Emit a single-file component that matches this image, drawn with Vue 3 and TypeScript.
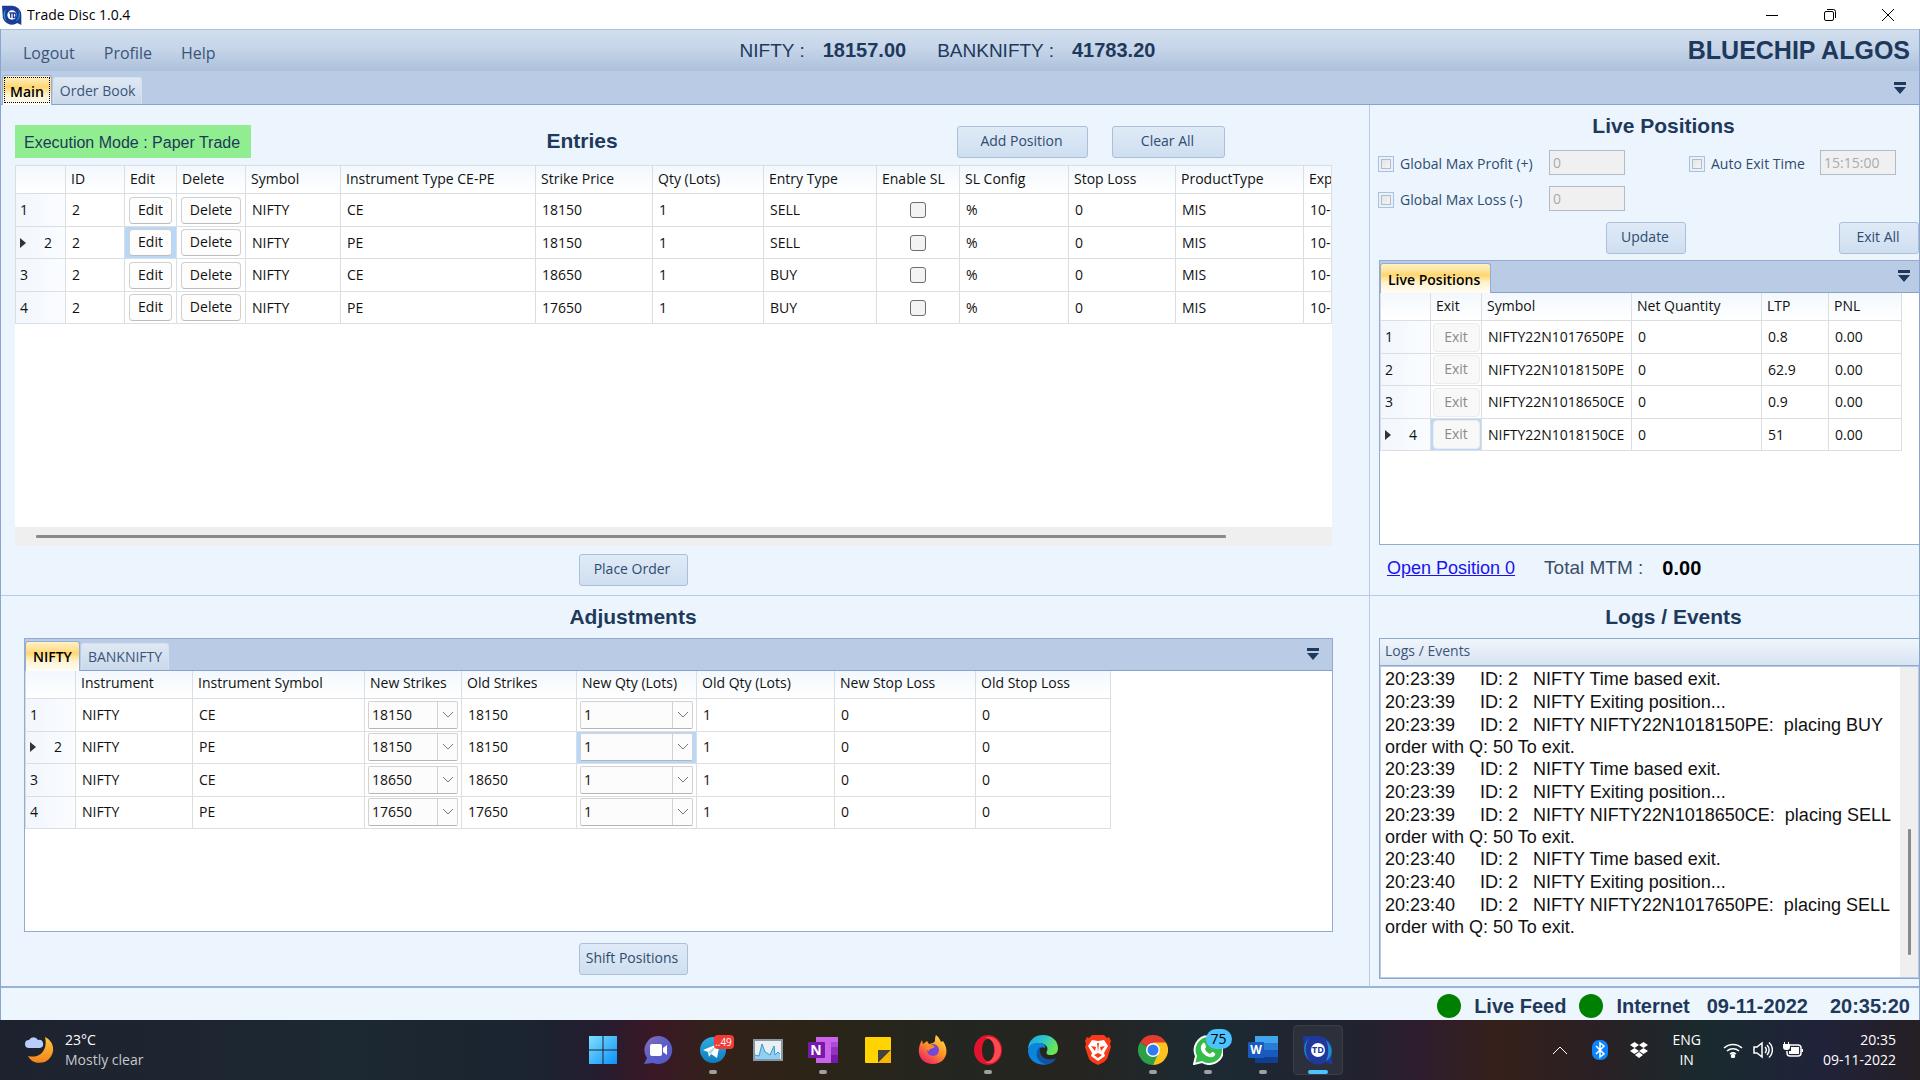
<script setup lang="ts">
import { ref } from 'vue'

interface Entry { id: number; symbol: string; type: string; strike: number; qty: number; side: string; sl: boolean; config: string; stop: number; product: string; expiry: string }
interface Adjustment { instrument: string; type: string; strike: number; qty: number }
interface Position { symbol: string; qty: number; ltp: string; pnl: string }

const entryHeaders = ['ID', 'Edit', 'Delete', 'Symbol', 'Instrument Type CE-PE', 'Strike Price', 'Qty (Lots)', 'Entry Type', 'Enable SL', 'SL Config', 'Stop Loss', 'ProductType', 'Exp']
const makeEntry = (type: string, strike: number, side: string): Entry => ({ id: 2, symbol: 'NIFTY', type, strike, qty: 1, side, sl: false, config: '%', stop: 0, product: 'MIS', expiry: '10-' })
const entries = ref<Entry[]>([
  makeEntry('CE', 18150, 'SELL'),
  makeEntry('PE', 18150, 'SELL'),
  makeEntry('CE', 18650, 'BUY'),
  makeEntry('PE', 17650, 'BUY'),
])

const adjustHeaders = ['Instrument', 'Instrument Symbol', 'New Strikes', 'Old Strikes', 'New Qty (Lots)', 'Old Qty (Lots)', 'New Stop Loss', 'Old Stop Loss']
const adjustments: Adjustment[] = [
  { instrument: 'NIFTY', type: 'CE', strike: 18150, qty: 1 },
  { instrument: 'NIFTY', type: 'PE', strike: 18150, qty: 1 },
  { instrument: 'NIFTY', type: 'CE', strike: 18650, qty: 1 },
  { instrument: 'NIFTY', type: 'PE', strike: 17650, qty: 1 },
]

const positions: Position[] = [
  { symbol: 'NIFTY22N1017650PE', qty: 0, ltp: '0.8', pnl: '0.00' },
  { symbol: 'NIFTY22N1018150PE', qty: 0, ltp: '62.9', pnl: '0.00' },
  { symbol: 'NIFTY22N1018650CE', qty: 0, ltp: '0.9', pnl: '0.00' },
  { symbol: 'NIFTY22N1018150CE', qty: 0, ltp: '51', pnl: '0.00' },
]

const logs: string[] = [
  '20:23:39     ID: 2   NIFTY Time based exit.',
  '20:23:39     ID: 2   NIFTY Exiting position...',
  '20:23:39     ID: 2   NIFTY NIFTY22N1018150PE:  placing BUY order with Q: 50 To exit.',
  '20:23:39     ID: 2   NIFTY Time based exit.',
  '20:23:39     ID: 2   NIFTY Exiting position...',
  '20:23:39     ID: 2   NIFTY NIFTY22N1018650CE:  placing SELL order with Q: 50 To exit.',
  '20:23:40     ID: 2   NIFTY Time based exit.',
  '20:23:40     ID: 2   NIFTY Exiting position...',
  '20:23:40     ID: 2   NIFTY NIFTY22N1017650PE:  placing SELL order with Q: 50 To exit.',
]
</script>

<template>
  <div class="screen">
    <header class="titlebar">
      <svg class="applogo" viewBox="0 0 30 30" aria-hidden="true">
        <path d="M0 1h15a14 14 0 0 1 14 14v15l-6-3a14 14 0 0 1-22-12z" fill="#1d3a97" />
        <path d="M6 6a13 13 0 0 0 1 19c-3-6-3-13-1-19zM23 5c4 5 3 14-3 20 7-3 10-12 3-20z" fill="#1c9ad0" />
        <circle cx="15" cy="15" r="7" fill="#fff" />
        <path d="M11 12h5M13 12v7M17 12v7h1c4 0 4-7 0-7z" fill="none" stroke="#1d3a97" stroke-width="2" />
      </svg>
      <span class="apptitle">Trade Disc 1.0.4</span>
      <div class="winbuttons">
        <button aria-label="Minimize"><svg viewBox="0 0 14 14"><path d="M1 7.500h12" /></svg></button>
        <button aria-label="Restore"><svg viewBox="0 0 14 14"><rect x="1.500" y="3.500" width="9" height="9" rx="1.500" /><path d="M4 1.500h6.500a2 2 0 0 1 2 2V10" /></svg></button>
        <button aria-label="Close"><svg viewBox="0 0 14 14"><path d="M1 1l12 12M13 1L1 13" /></svg></button>
      </div>
    </header>

    <div class="window">
      <div class="menubar">
        <nav>
          <a href="#">Logout</a>
          <a href="#">Profile</a>
          <a href="#">Help</a>
        </nav>
        <div class="quotes">
          <span>NIFTY :</span><b>18157.00</b>
          <span class="next">BANKNIFTY :</span><b>41783.20</b>
        </div>
        <div class="brand">BLUECHIP ALGOS</div>
      </div>

      <div class="tabstrip">
        <button class="tab active focus">Main</button>
        <button class="tab">Order Book</button>
        <svg class="overflow" viewBox="0 0 12 12"><path d="M0 0h12v3H0zM0 5h12l-6 7z" /></svg>
      </div>

      <main>
        <section class="entries">
          <div class="toolbar">
            <span class="mode">Execution Mode : Paper Trade</span>
            <h2>Entries</h2>
            <button class="btn add">Add Position</button>
            <button class="btn clear">Clear All</button>
          </div>
          <div class="gridbox">
            <table>
              <colgroup>
                <col style="width: 51px" /><col style="width: 59px" /><col style="width: 52px" /><col style="width: 69px" />
                <col style="width: 95px" /><col style="width: 195px" /><col style="width: 117px" /><col style="width: 111px" />
                <col style="width: 113px" /><col style="width: 83px" /><col style="width: 109px" /><col style="width: 107px" />
                <col style="width: 128px" /><col />
              </colgroup>
              <thead>
                <tr><th></th><th v-for="h in entryHeaders" :key="h">{{ h }}</th></tr>
              </thead>
              <tbody>
                <tr v-for="(e, i) in entries" :key="i">
                  <td class="rowhead"><span :class="{ current: i === 1 }">{{ i + 1 }}</span></td>
                  <td>{{ e.id }}</td>
                  <td class="ctl" :class="{ picked: i === 1 }"><button class="cellbtn edit">Edit</button></td>
                  <td class="ctl"><button class="cellbtn delete">Delete</button></td>
                  <td>{{ e.symbol }}</td>
                  <td>{{ e.type }}</td>
                  <td>{{ e.strike }}</td>
                  <td>{{ e.qty }}</td>
                  <td>{{ e.side }}</td>
                  <td class="ctl"><input v-model="e.sl" type="checkbox" class="sl" :aria-label="'Enable SL for entry ' + (i + 1)" /></td>
                  <td>{{ e.config }}</td>
                  <td>{{ e.stop }}</td>
                  <td>{{ e.product }}</td>
                  <td>{{ e.expiry }}</td>
                </tr>
              </tbody>
            </table>
          </div>
          <div class="hscroll"><i></i></div>
          <div class="actions centred"><button class="btn">Place Order</button></div>
        </section>

        <section class="live">
          <h2>Live Positions</h2>
          <form class="risk" @submit.prevent>
            <div class="riskrow">
              <label><input type="checkbox" />Global Max Profit (+)</label>
              <input class="field" type="text" value="0" disabled aria-label="Global max profit" />
              <label class="auto"><input type="checkbox" />Auto Exit Time</label>
              <input class="field" type="text" value="15:15:00" disabled aria-label="Auto exit time" />
            </div>
            <div class="riskrow">
              <label><input type="checkbox" />Global Max Loss (-)</label>
              <input class="field" type="text" value="0" disabled aria-label="Global max loss" />
            </div>
            <div class="riskbuttons">
              <button class="btn" type="button">Update</button>
              <button class="btn" type="button">Exit All</button>
            </div>
          </form>
          <div class="panel">
            <div class="tabstrip">
              <button class="tab active">Live Positions</button>
              <svg class="overflow" viewBox="0 0 12 12"><path d="M0 0h12v3H0zM0 5h12l-6 7z" /></svg>
            </div>
            <table class="fit">
              <colgroup>
                <col style="width: 51px" /><col style="width: 51px" /><col style="width: 150px" />
                <col style="width: 130px" /><col style="width: 67px" /><col style="width: 73px" />
              </colgroup>
              <thead>
                <tr><th></th><th>Exit</th><th>Symbol</th><th>Net Quantity</th><th>LTP</th><th>PNL</th></tr>
              </thead>
              <tbody>
                <tr v-for="(p, i) in positions" :key="p.symbol">
                  <td class="rowhead"><span :class="{ current: i === 3 }">{{ i + 1 }}</span></td>
                  <td class="ctl" :class="{ picked: i === 3 }"><button class="cellbtn exit" disabled>Exit</button></td>
                  <td>{{ p.symbol }}</td>
                  <td>{{ p.qty }}</td>
                  <td>{{ p.ltp }}</td>
                  <td>{{ p.pnl }}</td>
                </tr>
              </tbody>
            </table>
          </div>
          <div class="totals">
            <a href="#">Open Position 0</a>
            <span>Total MTM :</span>
            <b>0.00</b>
          </div>
        </section>

        <section class="adjust">
          <h2 class="centred">Adjustments</h2>
          <div class="panel">
            <div class="tabstrip">
              <button class="tab active">NIFTY</button>
              <button class="tab">BANKNIFTY</button>
              <svg class="overflow" viewBox="0 0 12 12"><path d="M0 0h12v3H0zM0 5h12l-6 7z" /></svg>
            </div>
            <table class="fit">
              <colgroup>
                <col style="width: 51px" /><col style="width: 117px" /><col style="width: 172px" /><col style="width: 97px" />
                <col style="width: 115px" /><col style="width: 120px" /><col style="width: 138px" /><col style="width: 141px" /><col style="width: 135px" />
              </colgroup>
              <thead>
                <tr><th></th><th v-for="h in adjustHeaders" :key="h">{{ h }}</th></tr>
              </thead>
              <tbody>
                <tr v-for="(a, i) in adjustments" :key="i">
                  <td class="rowhead"><span :class="{ current: i === 1 }">{{ i + 1 }}</span></td>
                  <td>{{ a.instrument }}</td>
                  <td>{{ a.type }}</td>
                  <td class="ctl">
                    <div class="combo">
                      <select :aria-label="'New strike ' + (i + 1)"><option>{{ a.strike }}</option></select>
                      <span><svg viewBox="0 0 10 6"><path d="M0 0l5 5 5-5" /></svg></span>
                    </div>
                  </td>
                  <td>{{ a.strike }}</td>
                  <td class="ctl" :class="{ picked: i === 1 }">
                    <div class="combo">
                      <select :aria-label="'New quantity ' + (i + 1)"><option>{{ a.qty }}</option></select>
                      <span><svg viewBox="0 0 10 6"><path d="M0 0l5 5 5-5" /></svg></span>
                    </div>
                  </td>
                  <td>{{ a.qty }}</td>
                  <td>0</td>
                  <td>0</td>
                </tr>
              </tbody>
            </table>
          </div>
          <div class="actions centred"><button class="btn">Shift Positions</button></div>
        </section>

        <section class="logs">
          <h2>Logs / Events</h2>
          <div class="logpanel">
            <div class="logtitle">Logs / Events</div>
            <div class="logbody">
              <div class="lines"><p v-for="(l, i) in logs" :key="i">{{ l }}</p></div>
              <div class="vscroll"><i></i></div>
            </div>
          </div>
        </section>
      </main>

      <footer class="status">
        <i class="lamp"></i><span class="feed">Live Feed</span>
        <i class="lamp"></i><span class="net">Internet</span>
        <span class="date">09-11-2022</span>
        <span>20:35:20</span>
      </footer>
    </div>

    <div class="taskbar">
      <div class="weather">
        <svg width="32" height="30" viewBox="0 0 32 30">
          <defs>
            <linearGradient id="moon" x1="0" y1="0" x2="0" y2="1"><stop offset="0" stop-color="#ffc83a" /><stop offset="1" stop-color="#f4821c" /></linearGradient>
          </defs>
          <path d="M21 2c9 4 11 15 4 22-6 6-17 5-21-3 13 3 20-7 17-19z" fill="url(#moon)" />
          <path d="M5 13a4 4 0 0 1 0-8 5 5 0 0 1 9 0 4 4 0 0 1 2 8z" fill="#b9cdfb" />
        </svg>
        <div><div>23°C</div><div class="dim">Mostly clear</div></div>
      </div>

      <div class="apps">
        <button aria-label="Start">
          <svg viewBox="0 0 30 30">
            <defs><linearGradient id="win" x1="0" y1="0" x2="1" y2="1"><stop offset="0" stop-color="#7fe0ff" /><stop offset="1" stop-color="#0a91f8" /></linearGradient></defs>
            <path d="M1 1h13.500v13.500H1zM15.500 1H29v13.500H15.500zM1 15.500h13.500V29H1zM15.500 15.500H29V29H15.500z" fill="url(#win)" />
          </svg>
        </button>
        <button aria-label="Chat">
          <svg viewBox="0 0 30 30">
            <defs><linearGradient id="chat" x1="0" y1="0" x2="1" y2="1"><stop offset="0" stop-color="#8d6cb8" /><stop offset=".5" stop-color="#5a5fc9" /><stop offset="1" stop-color="#5558c4" /></linearGradient></defs>
            <path d="M15 1a14 14 0 1 1-5 27l-9 1 3-6A14 14 0 0 1 15 1z" fill="url(#chat)" />
            <rect x="7" y="9" width="12" height="12" rx="2" fill="#fff" /><path d="M20 13l4-3v10l-4-3z" fill="#fff" />
          </svg>
        </button>
        <button aria-label="Telegram" class="running">
          <svg viewBox="0 0 30 30">
            <defs><linearGradient id="tg" x1="0" y1="0" x2="0" y2="1"><stop offset="0" stop-color="#34abe0" /><stop offset="1" stop-color="#0b7dbd" /></linearGradient></defs>
            <circle cx="15" cy="15" r="13" fill="url(#tg)" />
            <path d="M5 15l17-7-3 15-6-4-2 3-1-5z" fill="#fff" /><path d="M10 17l9-7-6 9" fill="#b5d6ea" />
          </svg>
          <span class="badge red">..49</span>
        </button>
        <button aria-label="Monitor">
          <svg viewBox="0 0 30 30">
            <rect x="1" y="5" width="28" height="20" fill="#e8eff5" stroke="#8a96a2" stroke-width="2" />
            <path d="M2 24v-4l4 1 3-12 3 8 2 1 3 2 4-9 1 9 3-3 2 2v5z" fill="#8ed0f5" />
            <path d="M2 20l4 1 3-12 3 8 2 1 3 2 4-9 1 9 3-3 2 2" fill="none" stroke="#3f95c8" />
          </svg>
        </button>
        <button aria-label="OneNote" class="running">
          <svg viewBox="0 0 30 30">
            <path d="M8 2h22v26H8z" fill="#ca64ea" /><path d="M23 7h7v5h-7z" fill="#ae4bd5" /><path d="M23 12h7v8h-7z" fill="#9332bf" /><path d="M23 20h7v8h-7z" fill="#7719aa" />
            <rect y="7" width="17" height="16" rx="1" fill="#7719aa" />
            <text x="8" y="20" font-size="14" font-weight="700" text-anchor="middle" fill="#fff">N</text>
          </svg>
        </button>
        <button aria-label="Sticky Notes">
          <svg viewBox="0 0 30 30"><rect x="2" y="2" width="26" height="26" rx="1" fill="#ffd400" /><path d="M15 28V15h13z" fill="#43423c" /><path d="M15 28L28 15v13z" fill="#f5b800" /></svg>
        </button>
        <button aria-label="Firefox">
          <svg viewBox="0 0 30 30">
            <defs><linearGradient id="fox" x1=".9" y1="0" x2=".2" y2="1"><stop offset="0" stop-color="#ffe34a" /><stop offset=".45" stop-color="#ff9a24" /><stop offset="1" stop-color="#ed1a69" /></linearGradient></defs>
            <path d="M18 0c3 2 4 5 5 7l2-1c8 12 1 23-10 23C2 29-3 17 4 5l1 4 4-3 2 3c3-1 5-1 6-3 0-2 0-4 1-6z" fill="url(#fox)" />
            <circle cx="15" cy="15" r="6" fill="#7547d8" /><path d="M9 10c5-2 6 1 8 2-2 2-6 1-6 4-3-1-4-4-2-6z" fill="#ff8a20" />
          </svg>
        </button>
        <button aria-label="Opera" class="running">
          <svg viewBox="0 0 30 30">
            <path fill-rule="evenodd" d="M15 0a14 15 0 1 1 0 30 14 15 0 0 1 0-30zm0 4c-8 0-8 22 0 22s8-22 0-22z" fill="#e3122d" />
            <path d="M12 3c5-4 16 1 16 12s-11 16-16 12c13 1 13-25 0-24z" fill="#fb4a51" />
          </svg>
        </button>
        <button aria-label="Edge">
          <svg viewBox="0 0 30 30">
            <defs>
              <linearGradient id="edgetop" x1="0" y1="0" x2="1" y2=".4"><stop offset="0" stop-color="#1a9fe0" /><stop offset=".5" stop-color="#2ac3d2" /><stop offset="1" stop-color="#6be552" /></linearGradient>
            </defs>
            <path d="M0 15C0 6 6 0 15 0c9 0 15 6 15 13 0 5-3 7-7 7-5 0-5-2-4-4 2-4-2-8-8-8C6 8 1 11 0 15z" fill="url(#edgetop)" />
            <path d="M0 15c1-5 6-8 11-7 5 0 7 3 6 5-5-3-8 3-6 8 2 4 7 7 13 5l2-1c-4 5-12 6-18 3C3 26 0 21 0 15z" fill="#0b84dc" />
            <path d="M12 12c-7 6-2 17 7 17 4 0 7-2 9-6-5 3-18 2-16-11z" fill="#1153a2" />
          </svg>
        </button>
        <button aria-label="Brave">
          <svg viewBox="0 0 30 30">
            <path d="M9 0h12l3 3 2-1 2 4-1 3 1 3-4 12-3 3-6 3-6-3-3-3L2 12l1-3-1-3 2-4 2 1z" fill="#f83a18" />
            <path d="M9 5l6 1 6-1 4 6-4 7 1 3-7 5-7-5 1-3-4-7z" fill="#fff" />
            <path d="M8 11l5 1-1 4zM22 11l-5 1 1 4zM11 20l4-2 4 2-4 3zM14 8h2l-1 9z" fill="#f83a18" />
          </svg>
        </button>
        <button aria-label="Chrome" class="running">
          <svg viewBox="0 0 30 30">
            <path d="M15 15L2 7.500A15 15 0 0 1 28 7.500z" fill="#e33b2e" /><path d="M2 7.500A15 15 0 0 0 15 30l6.500-11.500L15 15z" fill="#2c9f48" /><path d="M28 7.500A15 15 0 0 1 15 30l7-15-7-7.500z" fill="#fcc31e" />
            <circle cx="15" cy="15" r="7" fill="#fff" /><circle cx="15" cy="15" r="5.500" fill="#2f7cf0" />
          </svg>
        </button>
        <button aria-label="WhatsApp" class="running">
          <svg viewBox="0 0 30 30">
            <path d="M15 1a14 14 0 1 1-6 26l-8 2 2-8A14 14 0 0 1 15 1z" fill="#35bd4a" stroke="#fff" stroke-width="2" />
            <path d="M10 8c2-1 3 3 3 4l-1 2c1 3 3 4 5 5l2-2c2 0 4 2 3 3-3 6-16-1-14-9z" fill="#fff" />
          </svg>
          <span class="badge blue">75</span>
        </button>
        <button aria-label="Word" class="running">
          <svg viewBox="0 0 30 30">
            <path d="M7 1h23v7H7z" fill="#41a5ee" /><path d="M7 8h23v7H7z" fill="#2b7cd3" /><path d="M7 15h23v7H7z" fill="#185abd" /><path d="M7 22h23v6H7z" fill="#103f91" />
            <rect y="7" width="16" height="16" rx="1" fill="#185abd" />
            <text x="8" y="19" font-size="12" font-weight="700" text-anchor="middle" fill="#fff">W</text>
          </svg>
        </button>
        <button aria-label="Trade Disc" class="running current">
          <svg viewBox="0 0 30 30">
            <path d="M0 1h15a14 14 0 0 1 14 14v15l-6-3a14 14 0 0 1-22-12z" fill="#20389c" />
            <path d="M6 3a15 15 0 0 0 0 22C1 18 2 9 6 3zM23 5c9 8 6 18 0 21 3-7 3-14 0-21z" fill="#1b8fc4" />
            <circle cx="15" cy="15" r="7" fill="#fff" />
            <text x="15" y="18" font-size="9" font-weight="700" text-anchor="middle" fill="#20389c">TD</text>
          </svg>
        </button>
      </div>

      <div class="tray">
        <svg class="chev" width="16" height="10" viewBox="0 0 16 10"><path d="M1 9l7-7 7 7" /></svg>
        <svg class="bt" width="16" height="20" viewBox="0 0 16 20"><rect width="16" height="20" rx="7" fill="#0a84ff" /><path d="M4 6l8 8-4 3V3l4 3-8 8" stroke="#fff" fill="none" stroke-width="1.500" /></svg>
        <svg class="db" width="18" height="16" viewBox="0 0 18 16"><path d="M4.500 0L9 3 4.500 6 0 3zM13.500 0L18 3l-4.500 3L9 3zM4.500 6L9 9l-4.500 3L0 9zM13.500 6L18 9l-4.500 3L9 9zM9 10l4 3-4 3-4-3z" fill="#fff" /></svg>
        <div class="lang"><div>ENG</div><div>IN</div></div>
        <svg class="bold" width="20" height="16" viewBox="0 0 20 16"><path d="M1 6a13 13 0 0 1 18 0M4 9a9 9 0 0 1 12 0M7 12a5 5 0 0 1 6 0" /><circle cx="10" cy="14" r="1.500" fill="#fff" /></svg>
        <svg class="vol bold" width="20" height="18" viewBox="0 0 20 18"><path d="M1 6h3l5-4v14l-5-4H1zM12 6a4 4 0 0 1 0 6M14 4a7 7 0 0 1 0 10M16 1.500a10 10 0 0 1 0 15" /></svg>
        <svg class="bat bold" width="20" height="16" viewBox="0 0 20 16"><path d="M7 3h8a3 3 0 0 1 3 3v5a3 3 0 0 1-3 3H7a3 3 0 0 1-3-3V9" /><path d="M8 5h8v7H6V9h2zM18.500 7H20v3h-1.500zM0 2h1V0h1v2h3V0h1v2h1v3a3 3 0 0 1-3 3H3a3 3 0 0 1-3-3z" fill="#fff" stroke="none" /></svg>
        <div class="clock"><div>20:35</div><div>09-11-2022</div></div>
      </div>
    </div>
  </div>
</template>

<style>
body { margin: 0; }
</style>

<style scoped>
* { box-sizing: border-box; }
.screen {
  display: flex;
  flex-direction: column;
  min-height: 100vh;
  font: 14px/20px "Open Sans", "Noto Sans", sans-serif;
  color: #111;
  background: #fff;
}
button, input, select { font: inherit; color: inherit; margin: 0; }
h2 { margin: 0; font: bold 21px/42px "Liberation Sans", Arial, sans-serif; color: #1e395b; text-align: center; }
.centred { padding-right: 104px; }

.titlebar { display: flex; align-items: center; height: 29px; padding-left: 2px; color: #000; }
.applogo { width: 20px; height: 20px; margin-right: 5px; }
.winbuttons { display: flex; margin-left: auto; gap: 10px; padding-right: 8px; }
.winbuttons button { width: 48px; height: 28px; padding: 0; border: 0; background: none; }
.winbuttons svg { width: 14px; height: 14px; display: block; margin: 0 auto; fill: none; stroke: #000; }

.window { flex: 1; display: flex; flex-direction: column; border: 1px solid #8aa6cf; border-width: 0 1px; background: #ecf5fd; }
.menubar {
  display: flex;
  align-items: center;
  height: 42px;
  border-top: 1px solid #abc0da;
  background: linear-gradient(#d0deed, #c6d5e9 45%, #acc1dc);
  color: #1e395b;
}
.menubar nav { flex: 1 0 0; display: flex; gap: 29px; padding: 4px 0 0 22px; font-size: 16px; }
.menubar a { color: #3b5578; text-decoration: none; }
.quotes { display: flex; align-items: baseline; margin-right: 38px; font: 19px/24px "Liberation Sans", Arial, sans-serif; }
.quotes b { font-size: 20px; margin-left: 18px; }
.quotes .next { margin-left: 31px; }
.brand { flex: 1 0 0; text-align: right; padding: 0 9px 2px 0; font: bold 25px/28px "Liberation Sans", Arial, sans-serif; }

.tabstrip {
  display: flex;
  align-items: flex-end;
  gap: 1px;
  height: 34px;
  flex: none;
  background: #bacce5;
  border-bottom: 1px solid #86a3cb;
}
.tab {
  height: 27px;
  padding: 0 6px;
  border: 1px solid #d5e1f0;
  border-bottom: 0;
  border-radius: 3px 3px 0 0;
  background: linear-gradient(#dfe9f4, #c9d8ea);
  color: #3b5578;
}
.tab.active {
  height: 30px;
  padding: 2px 7px 0;
  margin-bottom: -1px;
  border-color: #93aed4;
  background: linear-gradient(#fff0c4, #ffdf8e 28%, #ffd56c 38%, #fff3cf 65%, #fffdf6);
  color: #000;
  font-weight: 600;
}
.tab.focus { margin-left: 1px; outline: 1px dotted #000; outline-offset: -3px; }
.overflow { width: 12px; height: 12px; margin: 0 13px 10px auto; fill: #1e395b; }

main { flex: 1; display: grid; grid-template-columns: minmax(0, 1fr) 550px; grid-template-rows: 5fr 4fr; }
section { display: flex; flex-direction: column; min-width: 0; border-bottom: 1px solid #b6cbe8; }
.live, .logs { border-left: 1px solid #b6cbe8; }
.adjust, .logs { border-bottom: 2px solid #9ab2d6; }

.btn {
  height: 32px;
  padding: 0 2px 2px 0;
  border: 1px solid #abbfdb;
  border-radius: 3px;
  background: linear-gradient(#dfeaf7, #cfdff0);
  color: #2f4b70;
}
.toolbar { display: flex; align-items: center; height: 60px; flex: none; padding: 20px 0 7px 14px; }
.toolbar h2 { flex: 1; padding: 0 44px 2px 0; line-height: 30px; }
.mode { width: 236px; height: 33px; background: #90ee90; padding-left: 9px; font: 16px/36px "Liberation Sans", Arial, sans-serif; color: #1e395b; }
.add { width: 131px; margin-right: 24px; }
.clear { width: 113px; margin-right: 144px; }

.gridbox { flex: 1; margin: 0 37px 0 14px; background: #fff; overflow: hidden; border-top: 1px solid #d9dee3; }
table { width: 100%; table-layout: fixed; border-collapse: separate; border-spacing: 0; background: #fff; }
table.fit { width: max-content; }
th, td { padding: 0 0 0 6px; border: solid #dcdfe2; border-width: 0 1px 1px 0; white-space: nowrap; overflow: hidden; text-align: left; }
th { height: 28px; padding: 0 0 2px 5px; font-weight: 400; background: linear-gradient(#f3f8fd, #fff); }
td { height: 32px; }
tbody tr:nth-child(odd) td { height: 33px; }
td:first-child, th:first-child { border-left: 1px solid #dcdfe2; }
.rowhead { padding-left: 4px; background: linear-gradient(90deg, #f2f7fe, #fafcff); }
.rowhead .current { display: flex; align-items: center; gap: 18px; }
.rowhead .current::before { content: ""; border: solid transparent; border-width: 5px 0 5px 6px; border-left-color: #333; }
td.ctl { padding: 0; text-align: center; }
.picked { background: #b8d8fb; }
.cellbtn { display: block; height: 27px; margin: 0 auto; padding: 0 0 1px; border: 1px solid #d0d0d0; border-bottom-color: #bcbcbc; border-radius: 4px; background: #fdfdfd; }
.edit { width: 43px; }
.delete { width: 60px; }
.exit { width: 47px; height: 29px; border-color: #ececec; background: #f8f8f8; color: #8b8b8b; }
.sl { appearance: none; display: block; width: 16px; height: 16px; margin: 0 auto; border: 1px solid #6d6d6d; border-radius: 3px; background: #f3f3f3; }
.hscroll { height: 19px; margin: 0 37px 0 14px; padding: 8px 106px 0 21px; background: #efefef; }
.hscroll i { display: block; height: 3px; border-radius: 1px; background: #8a8a8a; }
.actions { display: flex; justify-content: center; padding-top: 8px; }
.entries .actions { padding-bottom: 9px; }
.actions .btn { width: 109px; }

.live h2 { padding-left: 38px; }
.risk { display: flex; flex-direction: column; gap: 11px; padding: 3px 0 6px 8px; color: #2f4b70; }
.riskrow { display: flex; align-items: center; height: 25px; }
.riskrow label { display: flex; align-items: center; width: 171px; height: 28px; padding-top: 3px; white-space: nowrap; }
.riskrow label.auto { width: 131px; margin-left: 64px; }
.riskrow label input { appearance: none; width: 16px; height: 16px; margin-right: 6px; border: 1px solid #a9c1e4; background: linear-gradient(135deg, #dcdfe3, #fafafa); box-shadow: inset 0 0 0 2px #e8f0fa, inset 0 0 0 3px #b7bcc4; }
.field { width: 76px; height: 25px; padding: 0 3px 1px; border: 1px solid #b0bccb; background: #f0f0f0; color: #ababab; }
.riskbuttons { display: flex; justify-content: flex-end; gap: 153px; }
.riskbuttons .btn { width: 80px; }

.panel { flex: 1; display: flex; flex-direction: column; align-items: flex-start; border: 1px solid #93abcf; background: #fff; }
.panel .tabstrip { align-self: stretch; height: 32px; }
.live .panel { margin-left: 9px; border-right: 0; }
.live .tab.active { padding: 2px 10px 0 7px; }
.live .overflow { margin-right: 9px; }
.totals { display: flex; align-items: center; height: 50px; padding: 0 0 4px 17px; font: 18px/24px "Liberation Sans", Arial, sans-serif; color: #3b4f68; }
.totals a { color: #1b12f0; margin-right: 29px; }
.totals span { font-size: 19px; }
.totals b { margin-left: 19px; font-size: 20px; color: #000; }

.adjust .panel { margin: 0 36px 3px 23px; }
.adjust .actions { padding-bottom: 11px; }
.combo { position: relative; height: 28px; margin: 0 3px; }
.combo select { appearance: none; width: 100%; height: 28px; padding: 0 3px; border: 1px solid #d2d2d2; border-bottom-color: #b5b5b5; border-radius: 2px; background: #fcfcfc; display: block; }
.combo span { position: absolute; top: 1px; bottom: 1px; right: 1px; width: 20px; border-left: 1px solid #d2d2d2; display: grid; place-items: center; pointer-events: none; }
.combo svg { width: 10px; height: 6px; fill: none; stroke: #777; }

.logs h2 { padding-left: 58px; }
.logpanel { flex: 1; display: flex; flex-direction: column; margin: 0 0 7px 9px; border: 1px solid #8fa8cf; border-right: 0; }
.logtitle { height: 27px; padding: 2px 5px; border-bottom: 1px solid #8fa8cf; background: linear-gradient(#eff5fc, #d8e4f2); color: #3b5578; }
.logbody { flex: 1; display: flex; border: 1px solid #b9c9e3; background: #fff; }
.lines { flex: 1; padding: 1px 0 0 4px; font: 18px/22px "Liberation Sans", Arial, sans-serif; color: #111; }
.lines p { margin: 0 0 1px; white-space: pre-wrap; }
.lines p:nth-child(3n) { margin-bottom: 0; }
.vscroll { width: 18px; background: #efefef; padding: 162px 7px 22px 8px; }
.vscroll i { display: block; width: 3px; height: 100%; background: #8a8a8a; border-radius: 1px; }

.status { display: flex; align-items: center; justify-content: flex-end; height: 32px; padding: 4px 9px 0 0; font: bold 20px/24px "Liberation Sans", Arial, sans-serif; color: #1e395b; background: #eef6fd; }
.lamp { width: 24px; height: 24px; border-radius: 50%; background: #008000; margin-right: 13px; }
.feed { margin-right: 13px; }
.net { margin-right: 17px; }
.date { margin-right: 22px; }

.taskbar {
  display: flex;
  align-items: center;
  height: 60px;
  color: #fff;
  background: linear-gradient(90deg, #1e222f, #1c2832 18%, #1b2430 28%, #241d30 31%, #3a1826 34%, #33211a 37%, #2c2417 42%, #232620 50%, #26241f 56%, #1c2a33 63%, #22222f 71%, #2e1d2e 74%, #35201a 78%, #2a2024 83%, #192a2e 89%, #20223a 95%, #261f24);
}
.weather { flex: 1 0 0; display: flex; align-items: center; gap: 9px; padding-left: 24px; }
.dim { color: #c6c8cc; }
.apps { display: flex; gap: 5px; }
.apps button { position: relative; width: 50px; height: 50px; padding: 0; border: 1px solid transparent; border-radius: 4px; background: none; }
.apps button svg { display: block; width: 30px; height: 30px; margin: 0 auto; }
.apps button.running::after { content: ""; position: absolute; left: 20px; bottom: 0; width: 8px; height: 4px; border-radius: 2px; background: #a0a0a0; }
.apps button.current { border-color: #3c3e47; background: #2c303a; }
.apps button.current::after { left: 14px; width: 20px; background: #4cc2ff; }
.badge { position: absolute; line-height: 14px; }
.red { top: 9px; left: 25px; width: 20px; border-radius: 4px; background: #f23b34; color: #fff; font-size: 10px; }
.blue { top: 3px; left: 22px; width: 26px; height: 20px; border-radius: 10px; background: #4cc2ff; color: #000; font-size: 14px; line-height: 20px; }
.tray { flex: 1 0 0; display: flex; align-items: center; justify-content: flex-end; padding-right: 24px; }
.tray svg { fill: none; stroke: #fff; flex: none; }
.tray .bold { stroke-width: 1.5; }
.tray .bt, .tray .db { stroke: none; }
.tray .chev { margin-right: 24px; }
.tray .bt { margin-right: 22px; }
.tray .db { margin-right: 24px; }
.lang { margin-right: 22px; text-align: center; }
.vol, .bat { margin-left: 10px; }
.clock { margin-left: 20px; text-align: right; }
</style>
